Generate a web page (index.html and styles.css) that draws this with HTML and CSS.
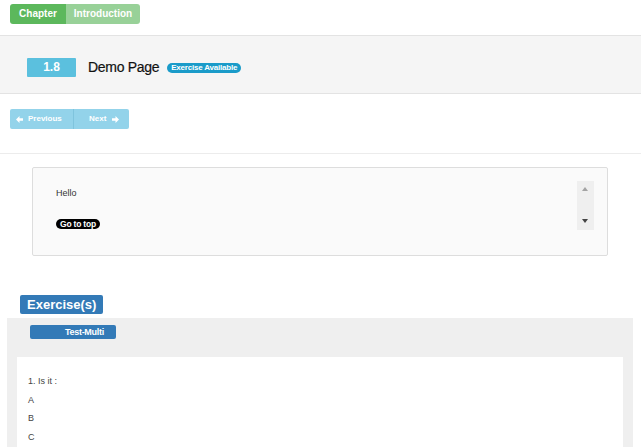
FILE: index.html
```html
<!DOCTYPE html>
<html>
<head>
<meta charset="utf-8">
<link rel="stylesheet" href="styles.css">
</head>
<body>
<div class="crumbs">
  <span class="crumb crumb-chapter">Chapter</span><span class="crumb crumb-intro">Introduction</span>
</div>
<div class="title-band">
  <span class="num">1.8</span>
  <span class="title">Demo Page</span>
  <span class="avail">Exercise Available</span>
</div>
<div class="pager">
  <span class="pbtn prev"><svg width="7" height="7" viewBox="0 0 8 8"><path d="M0 4 L4 0 L4 2.5 L8 2.5 L8 5.5 L4 5.5 L4 8 Z" fill="#fff"/></svg>Previous</span><span class="pbtn next">Next<svg width="7" height="7" viewBox="0 0 8 8"><path d="M8 4 L4 0 L4 2.5 L0 2.5 L0 5.5 L4 5.5 L4 8 Z" fill="#fff"/></svg></span>
</div>
<div class="rule"></div>
<div class="content-box">
  <div class="content-inner">
    <p class="hello">Hello</p>
    <span class="top-badge">Go to top</span>
  </div>
  <div class="scroller">
    <span class="arr-up"></span>
    <span class="arr-down"></span>
  </div>
</div>
<div class="ex-head"><span class="ex-title">Exercise(s)</span></div>
<div class="ex-area">
  <span class="ex-tab">Test-Multi</span>
  <div class="ex-panel">
    <p class="q">1. Is it :</p>
    <p class="opt">A</p>
    <p class="opt">B</p>
    <p class="opt">C</p>
  </div>
</div>
</body>
</html>
```
FILE: styles.css
```css
html, body { margin: 0; padding: 0; background: #fff; }
body { font-family: "Liberation Sans", Arial, sans-serif; color: #333; overflow: hidden; height: 447px; }

.crumbs { padding: 4px 0 0 10px; display: flex; }
.crumb { height: 20px; line-height: 20px; font-size: 10px; font-weight: bold; color: #fff; display: inline-block; }
.crumb-chapter { background: #5cb85c; width: 56px; text-align: center; border-radius: 3px 0 0 3px; }
.crumb-intro { background: #98d198; width: 74px; text-align: center; border-radius: 0 3px 3px 0; }

.title-band { margin-top: 11px; border-top: 1px solid #e3e3e3; border-bottom: 1px solid #e3e3e3; background: #f5f5f5; height: 59px; box-sizing: border-box; padding: 22px 0 0 27px; display: flex; align-items: flex-start; }
.num { width: 49px; height: 19px; background: #5bc0de; color: #fff; font-weight: bold; font-size: 12px; line-height: 19px; text-align: center; border-radius: 1px; }
.title { margin-left: 12px; font-size: 14px; color: #111; line-height: 18px; letter-spacing: -0.3px; -webkit-text-stroke: 0.2px #111; }
.avail { margin: 5px 0 0 8px; height: 10px; line-height: 10px; padding: 0 4px; background: #1a9bc9; color: #fff; font-size: 8px; font-weight: bold; border-radius: 5px; letter-spacing: -0.2px; }

.pager { margin: 15px 0 0 10px; display: flex; }
.pbtn { height: 20px; line-height: 20px; background: #93d3ea; color: #fff; font-size: 8px; font-weight: bold; display: inline-flex; align-items: center; box-sizing: border-box; }
.pbtn svg { display: block; }
.prev { width: 64px; padding-left: 6px; gap: 5px; border-radius: 2px 0 0 2px; border-right: 1px solid #7fc4dd; }
.next { width: 55px; padding-left: 15px; gap: 6px; border-radius: 0 2px 2px 0; }

.rule { margin-top: 24px; border-top: 1px solid #ececec; }

.content-box { margin: 13px 0 0 32px; width: 576px; height: 89px; box-sizing: border-box; border: 1px solid #ddd; border-radius: 2px; background: #fafafa; display: flex; justify-content: space-between; padding: 13px 13px 0 23px; }
.content-inner { padding-top: 6px; }
.hello { margin: 0; font-size: 9px; line-height: 12px; color: #333; }
.top-badge { display: inline-block; margin-top: 20px; height: 10px; line-height: 10px; padding: 0 4px; background: #000; color: #fff; font-size: 8.5px; font-weight: bold; border-radius: 5px; letter-spacing: -0.2px; }
.scroller { width: 17px; height: 49px; background: #efefef; position: relative; }
.arr-up { position: absolute; left: 5px; top: 6px; width: 0; height: 0; border-left: 3px solid transparent; border-right: 3px solid transparent; border-bottom: 4px solid #a3a3a3; }
.arr-down { position: absolute; left: 5px; top: 38px; width: 0; height: 0; border-left: 3.5px solid transparent; border-right: 3.5px solid transparent; border-top: 4px solid #444; }

.ex-head { margin: 39px 0 0 20px; }
.ex-title { display: inline-block; height: 19px; line-height: 19px; padding: 0 7px; background: #337ab7; color: #fff; font-weight: bold; font-size: 13px; border-radius: 2px; }
.ex-area { margin: 4px 8px 0 7px; background: #efefef; padding: 7px 10px 0 10px; height: 122px; overflow: hidden; }
.ex-tab { display: block; margin-left: 13px; width: 86px; height: 14px; line-height: 14px; box-sizing: border-box; padding-left: 35px; background: #337ab7; color: #fff; font-weight: bold; font-size: 9px; border-radius: 2px; letter-spacing: -0.3px; }
.ex-panel { margin-top: 18px; background: #fff; padding: 15px 11px 0; height: 75px; }
.q, .opt { margin: 0; font-size: 9px; line-height: 18.5px; color: #444; }
```
